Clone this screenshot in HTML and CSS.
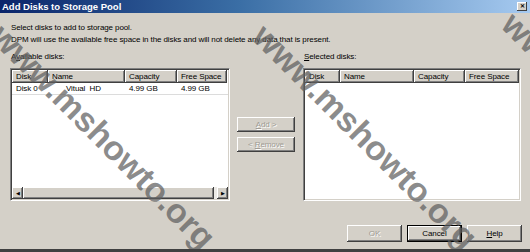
FILE: index.html
```html
<!DOCTYPE html>
<html lang="en">
<head>
  <meta charset="UTF-8">
  <title>Add Disks to Storage Pool</title>
  <link rel="stylesheet" href="styles.css">
</head>
<body>
  <div class="dialog">
    <div class="titlebar">
      <span class="title">Add Disks to Storage Pool</span>
      <span class="close-btn">&#x2715;</span>
    </div>

    <div class="dialog-body">
      <p class="intro">Select disks to add to storage pool.</p>
      <p class="intro">DPM will use the available free space in the disks and will not delete any data that is present.</p>

      <div class="lists">
        <div class="list-col list-left">
          <div class="list-label">A<u>v</u>ailable disks:</div>
          <div class="listbox">
            <div class="head-row">
              <span class="col col-disk">Disk</span>
              <span class="col col-name">Name</span>
              <span class="col col-cap">Capacity</span>
              <span class="col col-free">Free Space</span>
            </div>
            <div class="disk-row">
              <span class="col col-disk">Disk 0</span>
              <span class="col col-name name-indent">Vitual&nbsp; HD</span>
              <span class="col col-cap">4.99 GB</span>
              <span class="col col-free">4.99 GB</span>
            </div>
            <div class="list-fill"></div>
            <div class="hscroll">
              <span class="arrow-btn">&#9664;</span>
              <span class="thumb"></span>
              <span class="arrow-btn">&#9654;</span>
            </div>
          </div>
        </div>

        <div class="move-buttons">
          <button class="btn btn-move" disabled><u>A</u>dd &gt;</button>
          <button class="btn btn-move" disabled>&lt; <u>R</u>emove</button>
        </div>

        <div class="list-col list-right">
          <div class="list-label"><u>S</u>elected disks:</div>
          <div class="listbox">
            <div class="head-row">
              <span class="col col-disk">Disk</span>
              <span class="col col-name">Name</span>
              <span class="col col-cap">Capacity</span>
              <span class="col col-free">Free Space</span>
            </div>
            <div class="list-fill"></div>
          </div>
        </div>
      </div>

      <div class="footer">
        <button class="btn btn-foot" disabled>OK</button>
        <button class="btn btn-foot btn-default">Cancel</button>
        <button class="btn btn-foot"><u>H</u>elp</button>
      </div>
    </div>

    <span class="watermark wm-1">www.mshowto.org</span>
    <span class="watermark wm-2">www.mshowto.org</span>
    <span class="watermark wm-3">www.mshowto.org</span>
  </div>
</body>
</html>
```

FILE: styles.css
```css
* {
  margin: 0;
  padding: 0;
  box-sizing: border-box;
}

body {
  font-family: 'Liberation Sans', Arial, sans-serif;
  font-size: 8px;
  letter-spacing: -0.1px;
  color: #000;
  background: #d4d0c8;
  overflow: hidden;
}

.dialog {
  position: relative;
  width: 530px;
  height: 252px;
  background: #d4d0c8;
  border-bottom: 3px solid #404040;
  display: flex;
  flex-direction: column;
  overflow: hidden;
}

/* Title bar */
.titlebar {
  height: 13px;
  background: linear-gradient(to right, #0a246a 0%, #3a6ea5 45%, #a6caf0 100%);
  display: flex;
  align-items: center;
  justify-content: space-between;
  padding: 0 3px 0 2px;
}

.title {
  color: #fff;
  font-weight: bold;
  font-size: 9.5px;
  letter-spacing: 0;
  line-height: 13px;
}

.close-btn {
  width: 10px;
  height: 9px;
  background: #d4d0c8;
  box-shadow: inset -1px -1px #404040, inset 1px 1px #fff;
  font-size: 6px;
  line-height: 9px;
  text-align: center;
  font-weight: bold;
}

/* Body */
.dialog-body {
  flex: 1;
  padding: 9px 8px 0 11px;
}

.intro {
  line-height: 12px;
}

.lists {
  display: flex;
  margin-top: 5px;
  margin-left: -1px;
}

.list-label {
  line-height: 12px;
  margin: 0 0 5px 1px;
}

.listbox {
  height: 133px;
  background: #fff;
  border: 1px solid;
  border-color: #808080 #fff #fff #808080;
  box-shadow: inset 1px 1px #404040, inset -1px -1px #d4d0c8;
  padding: 1px;
  display: flex;
  flex-direction: column;
}

.list-left { width: 220px; }
.list-right { width: 218px; }

.head-row {
  display: flex;
  height: 13px;
  flex-shrink: 0;
}

.head-row .col {
  background: #d4d0c8;
  box-shadow: inset -1px -1px #404040, inset 1px 1px #fff, inset -2px -2px #808080;
  line-height: 13px;
  padding-left: 4px;
}

.disk-row {
  display: flex;
  height: 12px;
  border-bottom: 1px solid #dcdcdc;
  flex-shrink: 0;
}

.disk-row .col {
  line-height: 11px;
  padding-left: 4px;
}

.name-indent { padding-left: 18px !important; }

.col { white-space: nowrap; overflow: hidden; }

.list-left .col-disk { width: 36px; }
.list-left .col-name { width: 77px; }
.list-left .col-cap  { width: 52px; }
.list-left .col-free { width: 50px; }

.list-right .col-disk { width: 35px; }
.list-right .col-name { width: 74px; }
.list-right .col-cap  { width: 51px; }
.list-right .col-free { width: 54px; }

.list-fill { flex: 1; }

/* Horizontal scrollbar */
.hscroll {
  display: flex;
  height: 12px;
  background: #eceae6;
}

.arrow-btn {
  width: 11px;
  height: 12px;
  background: #d4d0c8;
  box-shadow: inset -1px -1px #404040, inset 1px 1px #fff, inset -2px -2px #808080;
  font-size: 5px;
  line-height: 12px;
  text-align: center;
}

.thumb {
  flex: 1;
  margin-right: 3px;
  background: #d4d0c8;
  box-shadow: inset -1px -1px #404040, inset 1px 1px #fff, inset -2px -2px #808080;
}

/* Middle buttons */
.move-buttons {
  width: 58px;
  margin: 17px 8px 0 7px;
  display: flex;
  flex-direction: column;
  justify-content: center;
  gap: 5px;
}

.btn {
  font-family: 'Liberation Sans', Arial, sans-serif;
  font-size: 8px;
  letter-spacing: -0.1px;
  background: #d4d0c8;
  border: none;
  color: #000;
  box-shadow: inset -1px -1px #404040, inset 1px 1px #fff, inset -2px -2px #808080;
}

.btn:disabled {
  color: #a09c94;
  text-shadow: 1px 1px #fff;
}

.btn-move {
  height: 15px;
  line-height: 15px;
}

/* Footer */
.footer {
  display: flex;
  justify-content: flex-end;
  gap: 5px;
  margin-top: 24px;
}

.btn-foot {
  width: 55px;
  height: 17px;
}

.btn-default {
  box-shadow: inset 0 0 0 1px #000, inset -2px -2px #404040, inset 2px 2px #fff, inset -3px -3px #808080;
}

/* Watermark overlay */
.watermark {
  position: absolute;
  font-family: 'Liberation Sans', Arial, sans-serif;
  font-weight: bold;
  font-size: 34px;
  line-height: 34px;
  letter-spacing: 0;
  color: rgba(95, 95, 95, 0.72);
  transform: rotate(45deg);
  transform-origin: left center;
  white-space: nowrap;
  pointer-events: none;
}

.wm-1 { left: -3px; top: 13px; }
.wm-2 { left: 259px; top: 13px; }
.wm-3 { left: 508px; top: 1px; }
```
